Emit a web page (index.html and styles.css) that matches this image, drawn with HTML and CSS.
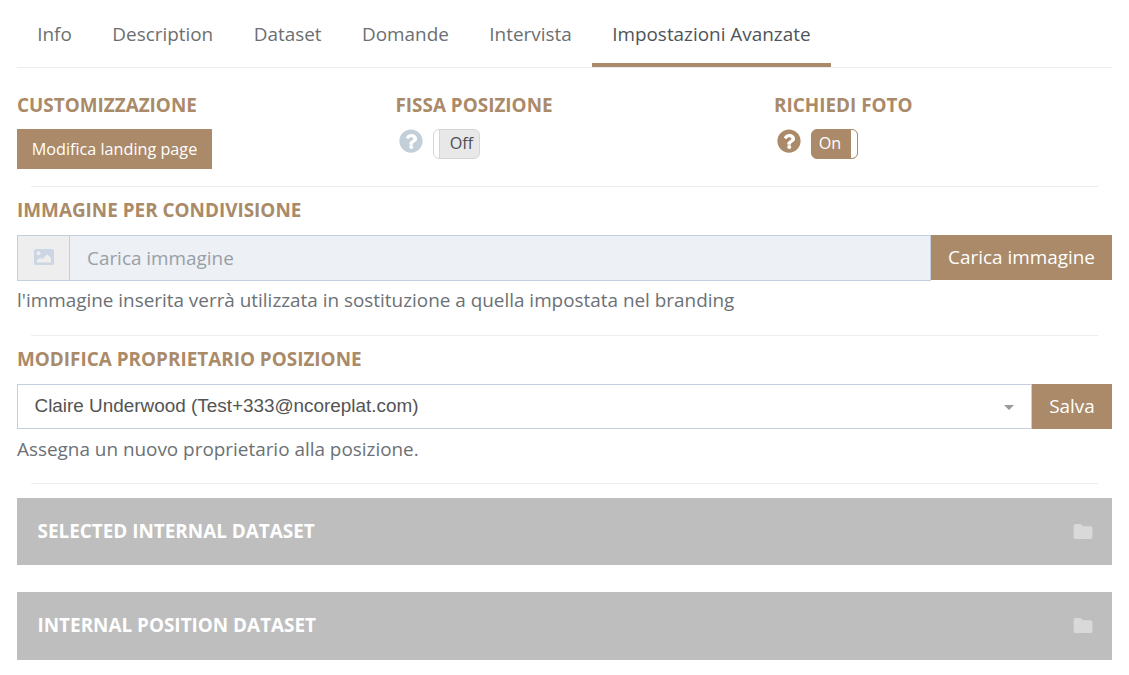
FILE: index.html
```html
<!DOCTYPE html>
<html lang="it">
<head>
<meta charset="utf-8">
<title>Impostazioni Avanzate</title>
<link rel="stylesheet" href="styles.css">
</head>
<body>
<nav class="tabs">
  <a class="tab">Info</a>
  <a class="tab">Description</a>
  <a class="tab">Dataset</a>
  <a class="tab">Domande</a>
  <a class="tab">Intervista</a>
  <a class="tab active">Impostazioni Avanzate</a>
</nav>
<section class="columns">
  <div class="col">
    <h4 class="label">CUSTOMIZZAZIONE</h4>
    <button class="btn btn-landing">Modifica landing page</button>
  </div>
  <div class="col">
    <h4 class="label">FISSA POSIZIONE</h4>
    <div class="switch-row">
      <svg class="help muted" viewBox="0 0 512 512"><path fill-rule="evenodd" d="M256 8C119 8 8 119 8 256s111 248 248 248 248-111 248-248S393 8 256 8zm6 332c-23 0-42 19-42 42s19 42 42 42 42-19 42-42-19-42-42-42zm4-232c-54 0-88 23-115 63-4 5-3 12 2 16l34 26c5 4 13 3 17-2 18-22 30-35 57-35 20 0 46 13 46 33 0 15-13 23-33 34-24 13-55 30-55 71v8c0 7 5 12 12 12h58c7 0 12-5 12-12v-6c0-29 84-30 84-107 0-58-60-101-119-101z"/></svg>
      <span class="toggle off"><span class="knob"></span><span class="state">Off</span></span>
    </div>
  </div>
  <div class="col">
    <h4 class="label">RICHIEDI FOTO</h4>
    <div class="switch-row">
      <svg class="help accent" viewBox="0 0 512 512"><path fill-rule="evenodd" d="M256 8C119 8 8 119 8 256s111 248 248 248 248-111 248-248S393 8 256 8zm6 332c-23 0-42 19-42 42s19 42 42 42 42-19 42-42-19-42-42-42zm4-232c-54 0-88 23-115 63-4 5-3 12 2 16l34 26c5 4 13 3 17-2 18-22 30-35 57-35 20 0 46 13 46 33 0 15-13 23-33 34-24 13-55 30-55 71v8c0 7 5 12 12 12h58c7 0 12-5 12-12v-6c0-29 84-30 84-107 0-58-60-101-119-101z"/></svg>
      <span class="toggle on"><span class="state">On</span><span class="knob"></span></span>
    </div>
  </div>
</section>
<hr class="rule rule-a">
<section class="block block-image">
  <h4 class="label">IMMAGINE PER CONDIVISIONE</h4>
  <div class="input-group">
    <span class="addon">
      <svg class="pic" viewBox="0 0 20 16"><path fill-rule="evenodd" d="M2 0h16a2 2 0 0 1 2 2v12a2 2 0 0 1-2 2H2a2 2 0 0 1-2-2V2a2 2 0 0 1 2-2zm2.500 2.200a2 2 0 1 0 0 4 2 2 0 0 0 0-4zM3 13.500h14V9l-3.700-3.700-5 5-1.800-1.800L3 11z"/></svg>
    </span>
    <span class="fake-input">Carica immagine</span>
    <button class="btn btn-side btn-upload">Carica immagine</button>
  </div>
  <p class="help-text">l'immagine inserita verrà utilizzata in sostituzione a quella impostata nel branding</p>
</section>
<hr class="rule rule-b">
<section class="block block-owner">
  <h4 class="label">MODIFICA PROPRIETARIO POSIZIONE</h4>
  <div class="input-group group-owner">
    <div class="select">
      <span class="select-value">Claire Underwood (Test+333@ncoreplat.com)</span>
      <span class="caret"></span>
    </div>
    <button class="btn btn-side btn-save">Salva</button>
  </div>
  <p class="help-text">Assegna un nuovo proprietario alla posizione.</p>
</section>
<hr class="rule rule-c">
<section class="panel panel-first">
  <span class="panel-title">SELECTED INTERNAL DATASET</span>
  <svg class="folder" viewBox="0 0 20 16"><path d="M2 0h5.500l2.500 2.500h8a2 2 0 0 1 2 2V14a2 2 0 0 1-2 2H2a2 2 0 0 1-2-2V2a2 2 0 0 1 2-2z"/></svg>
</section>
<section class="panel panel-second">
  <span class="panel-title">INTERNAL POSITION DATASET</span>
  <svg class="folder" viewBox="0 0 20 16"><path d="M2 0h5.500l2.500 2.500h8a2 2 0 0 1 2 2V14a2 2 0 0 1-2 2H2a2 2 0 0 1-2-2V2a2 2 0 0 1 2-2z"/></svg>
</section>
</body>
</html>
```

FILE: styles.css
```css
* { box-sizing: border-box; }
html, body { margin: 0; height: 675px; overflow: hidden; }
body {
  padding: 0 17px;
  background: #fff;
  font-family: "Open Sans", sans-serif;
  color: #6c757d;
}
.tabs {
  display: flex;
  height: 68px;
  border-bottom: 1px solid #ebedef;
}
.tab {
  padding: 20px 20.250px 0;
  font-size: 18.900px;
  line-height: 28px;
  color: #6b6f72;
}
.tab.active {
  color: #4f5458;
  border-bottom: 4px solid #aa8a68;
  height: 67px;
}
.columns { display: flex; margin-top: 25px; }
.col { flex: none; width: 378.500px; }
.label {
  margin: 0;
  font-size: 18.900px;
  line-height: 24px;
  font-weight: 700;
  color: #aa8a68;
}
.btn {
  border: 0;
  border-radius: 0;
  background: #aa8a68;
  color: #fff;
  font-family: inherit;
  padding: 0;
}
.btn-landing {
  display: block;
  margin-top: 12px;
  width: 195px;
  height: 40px;
  font-size: 16.200px;
}
.switch-row { display: flex; align-items: flex-start; margin-top: 12px; padding-left: 3px; }
.help { width: 24px; height: 24px; margin-right: 10px; }
.help.muted { fill: #c2ced8; }
.help.accent { fill: #aa8a68; }
.toggle {
  display: flex;
  width: 47px;
  height: 30px;
  border-radius: 6px;
  overflow: hidden;
  font-size: 16.200px;
  line-height: 27px;
}
.toggle.off { border: 1px solid #d3d6d9; background: #e8e8e8; color: #4a4f54; }
.toggle.on { border: 1px solid #aa8a68; background: #aa8a68; color: #fff; }
.knob { width: 6px; background: #fff; flex: none; }
.toggle.off .knob { border-right: 1px solid #d3d6d9; }
.toggle .state { flex: 1; text-align: center; }
.toggle.off .state { padding-left: 5px; }
.toggle.on .state { padding-right: 3px; }
.rule { margin: 0 14px; border: 0; border-top: 1px solid #ebedef; }
.rule-a { margin-top: 17px; }
.block-image { margin-top: 11px; }
.input-group { display: flex; margin-top: 13px; height: 46px; }
.group-owner { height: 45px; }
.addon {
  display: flex;
  align-items: center;
  justify-content: center;
  width: 53px;
  background: #eeeeee;
  border: 1px solid #c5cede;
  border-right: 1px solid #c5cede;
}
.pic { width: 20px; height: 16px; fill: #ccd5e3; margin-top: -2px; }
.fake-input {
  flex: 1;
  background: #edf0f5;
  border: 1px solid #c5cede;
  border-left: 0;
  padding-left: 17px;
  font-size: 18.900px;
  line-height: 44px;
  color: #999fa6;
}
.btn-side { font-size: 18.900px; height: 45px; padding-bottom: 2px; }
.btn-upload { width: 181px; }
.btn-save { width: 80px; }
.help-text {
  margin: 6px 0 0;
  font-size: 18.900px;
  line-height: 27px;
  color: #6c7176;
}
.group-owner + .help-text { margin-top: 7px; }
.rule-b { margin-top: 21px; }
.block-owner { margin-top: 11px; }
.select {
  flex: 1;
  display: flex;
  align-items: center;
  justify-content: space-between;
  height: 45px;
  border: 1px solid #c5cede;
  padding: 0 17px 2px 16.500px;
  background: #fff;
}
.select-value {
  font-family: "Liberation Sans", Arial, sans-serif;
  font-size: 18.900px;
  color: #545454;
}
.caret {
  width: 0;
  height: 0;
  border-left: 5px solid transparent;
  border-right: 5px solid transparent;
  border-top: 5px solid #9a9a9a;
  margin-top: 3px;
}
.rule-c { margin-top: 20px; }
.panel {
  display: flex;
  align-items: center;
  justify-content: space-between;
  height: 67px;
  padding: 0 19.500px 0 20.500px;
  background: #bebebe;
  color: #fff;
}
.panel-first { margin-top: 14px; }
.panel-second { margin-top: 27px; height: 68px; }
.panel-title { font-size: 18.900px; font-weight: 700; margin-bottom: 1px; }
.panel-second .panel-title { margin-bottom: 2px; }
.panel-second .folder { margin-bottom: 1px; }
.folder { width: 20px; height: 15px; fill: #d9d9d9; }
```
